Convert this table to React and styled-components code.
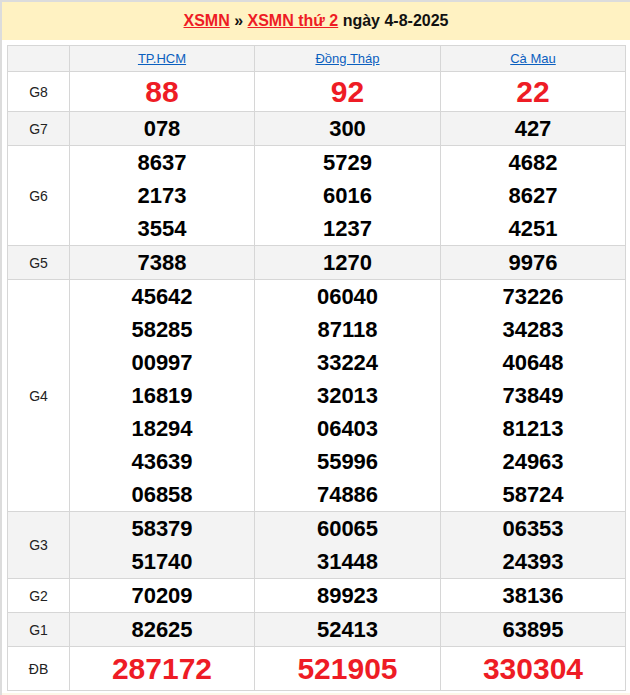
import styled, { createGlobalStyle } from 'styled-components';

const GlobalStyle = createGlobalStyle`
  body {
    margin: 0;
    background: #fff;
    font-family: "Liberation Sans", Arial, sans-serif;
  }
`;

const Frame = styled.div`
  border-top: 2px solid #dcdcdc;
  border-left: 2px solid #dcdcdc;
  width: 628px;
`;

const Title = styled.h2`
  margin: 0;
  height: 38px;
  line-height: 38px;
  background: #fff2c2;
  text-align: center;
  font-size: 16px;
  font-weight: bold;
  color: #111;
`;

const TitleLink = styled.a`
  color: #ee1c25;
  text-decoration: underline;
`;

const Body = styled.div`
  padding: 5px 3px 2px 5px;
`;

const Table = styled.table`
  border-collapse: collapse;
  width: 618px;
  table-layout: fixed;
`;

const HeadCell = styled.th`
  border: 1px solid #d6d6d6;
  background: #f3f3f3;
  height: 25px;
  padding: 0;
  font-size: 13px;
  font-weight: normal;
  text-align: center;
`;

const Province = styled.a`
  color: #0b5fbf;
  text-decoration: underline;
`;

const Row = styled.tr`
  background: ${(p) => (p.$alt ? '#f3f3f3' : '#fff')};
`;

const Label = styled.td`
  border: 1px solid #d6d6d6;
  padding: 0;
  text-align: center;
  font-size: 14px;
  color: #222;
`;

const Cell = styled.td`
  border: 1px solid #d6d6d6;
  padding: 0;
  text-align: center;
`;

const Num = styled.div`
  font-size: ${(p) => (p.$big ? '30px' : '22px')};
  line-height: ${(p) => p.$lh || '33px'};
  font-weight: bold;
  color: ${(p) => (p.$big ? '#ee1c25' : '#000')};
`;

const Footer = styled.div`
  height: 4px;
  background: #fdf7e8;
`;

const rows = [
  { g: 'G8', big: true, lh: '39px', v: [['88'], ['92'], ['22']] },
  { g: 'G7', v: [['078'], ['300'], ['427']] },
  { g: 'G6', v: [['8637', '2173', '3554'], ['5729', '6016', '1237'], ['4682', '8627', '4251']] },
  { g: 'G5', v: [['7388'], ['1270'], ['9976']] },
  {
    g: 'G4',
    v: [
      ['45642', '58285', '00997', '16819', '18294', '43639', '06858'],
      ['06040', '87118', '33224', '32013', '06403', '55996', '74886'],
      ['73226', '34283', '40648', '73849', '81213', '24963', '58724'],
    ],
  },
  { g: 'G3', v: [['58379', '51740'], ['60065', '31448'], ['06353', '24393']] },
  { g: 'G2', v: [['70209'], ['89923'], ['38136']] },
  { g: 'G1', v: [['82625'], ['52413'], ['63895']] },
  { g: 'ĐB', big: true, lh: '43px', v: [['287172'], ['521905'], ['330304']] },
];

export default function App() {
  return (
    <>
      <GlobalStyle />
      <Frame>
        <Title>
          <TitleLink href="#">XSMN</TitleLink> » <TitleLink href="#">XSMN thứ 2</TitleLink> ngày 4-8-2025
        </Title>
        <Body>
          <Table>
            <colgroup>
              <col style={{ width: 62 }} />
              <col style={{ width: 185 }} />
              <col style={{ width: 186 }} />
              <col style={{ width: 185 }} />
            </colgroup>
            <thead>
              <tr>
                <HeadCell />
                <HeadCell><Province href="#">TP.HCM</Province></HeadCell>
                <HeadCell><Province href="#">Đồng Tháp</Province></HeadCell>
                <HeadCell><Province href="#">Cà Mau</Province></HeadCell>
              </tr>
            </thead>
            <tbody>
              {rows.map((r, i) => (
                <Row key={r.g} $alt={i % 2 === 1}>
                  <Label>{r.g}</Label>
                  {r.v.map((col, j) => (
                    <Cell key={j}>
                      {col.map((n) => (
                        <Num key={n} $big={r.big} $lh={r.lh}>{n}</Num>
                      ))}
                    </Cell>
                  ))}
                </Row>
              ))}
            </tbody>
          </Table>
        </Body>
        <Footer />
      </Frame>
    </>
  );
}
